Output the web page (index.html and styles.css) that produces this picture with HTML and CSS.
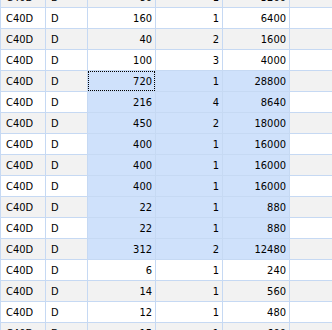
FILE: index.html
```html
<!DOCTYPE html>
<html>
<head>
<meta charset="utf-8">
<link rel="stylesheet" href="styles.css">
</head>
<body>
<div class="grid">
  <div class="row alt"><div class="c">C40D</div><div class="c">D</div><div class="c n">80</div><div class="c n">1</div><div class="c n">3200</div><div class="c"></div></div>
  <div class="row"><div class="c">C40D</div><div class="c">D</div><div class="c n">160</div><div class="c n">1</div><div class="c n">6400</div><div class="c"></div></div>
  <div class="row alt"><div class="c">C40D</div><div class="c">D</div><div class="c n">40</div><div class="c n">2</div><div class="c n">1600</div><div class="c"></div></div>
  <div class="row"><div class="c">C40D</div><div class="c">D</div><div class="c n">100</div><div class="c n">3</div><div class="c n">4000</div><div class="c"></div></div>
  <div class="row alt"><div class="c">C40D</div><div class="c">D</div><div class="c n sel focus">720</div><div class="c n sel">1</div><div class="c n sel">28800</div><div class="c"></div></div>
  <div class="row"><div class="c">C40D</div><div class="c">D</div><div class="c n sel">216</div><div class="c n sel">4</div><div class="c n sel">8640</div><div class="c"></div></div>
  <div class="row alt"><div class="c">C40D</div><div class="c">D</div><div class="c n sel">450</div><div class="c n sel">2</div><div class="c n sel">18000</div><div class="c"></div></div>
  <div class="row"><div class="c">C40D</div><div class="c">D</div><div class="c n sel">400</div><div class="c n sel">1</div><div class="c n sel">16000</div><div class="c"></div></div>
  <div class="row alt"><div class="c">C40D</div><div class="c">D</div><div class="c n sel">400</div><div class="c n sel">1</div><div class="c n sel">16000</div><div class="c"></div></div>
  <div class="row"><div class="c">C40D</div><div class="c">D</div><div class="c n sel">400</div><div class="c n sel">1</div><div class="c n sel">16000</div><div class="c"></div></div>
  <div class="row alt"><div class="c">C40D</div><div class="c">D</div><div class="c n sel">22</div><div class="c n sel">1</div><div class="c n sel">880</div><div class="c"></div></div>
  <div class="row"><div class="c">C40D</div><div class="c">D</div><div class="c n sel">22</div><div class="c n sel">1</div><div class="c n sel">880</div><div class="c"></div></div>
  <div class="row alt"><div class="c">C40D</div><div class="c">D</div><div class="c n sel">312</div><div class="c n sel">2</div><div class="c n sel">12480</div><div class="c"></div></div>
  <div class="row"><div class="c">C40D</div><div class="c">D</div><div class="c n">6</div><div class="c n">1</div><div class="c n">240</div><div class="c"></div></div>
  <div class="row alt"><div class="c">C40D</div><div class="c">D</div><div class="c n">14</div><div class="c n">1</div><div class="c n">560</div><div class="c"></div></div>
  <div class="row"><div class="c">C40D</div><div class="c">D</div><div class="c n">12</div><div class="c n">1</div><div class="c n">480</div><div class="c"></div></div>
  <div class="row alt"><div class="c">C40D</div><div class="c">D</div><div class="c n">15</div><div class="c n">1</div><div class="c n">600</div><div class="c"></div></div>
</div>
</body>
</html>
```
FILE: styles.css
```css
html, body {
  margin: 0;
  padding: 0;
  background: #ffffff;
  overflow: hidden;
}
.grid {
  display: flex;
  flex-direction: column;
  gap: 1px;
  background: #c6d9f3;
  padding-left: 1px;
  margin-top: -13px;
  font-family: "DejaVu Sans Condensed", "DejaVu Sans", sans-serif;
  font-stretch: condensed;
  font-size: 11px;
  color: #000;
}
.row {
  display: grid;
  grid-template-columns: 44px 41px 67px 66px 66px 1fr;
  column-gap: 1px;
  height: 20px;
}
.c {
  background: #ffffff;
  line-height: 21px;
  padding: 0 3px 0 5px;
  white-space: nowrap;
  overflow: hidden;
}
.row.alt .c {
  background: #f2f2f2;
}
.n {
  text-align: right;
}
.row .c.sel {
  background: #cfe1fb;
}
.focus {
  outline: 1px dotted #000;
  outline-offset: -1px;
}
```
